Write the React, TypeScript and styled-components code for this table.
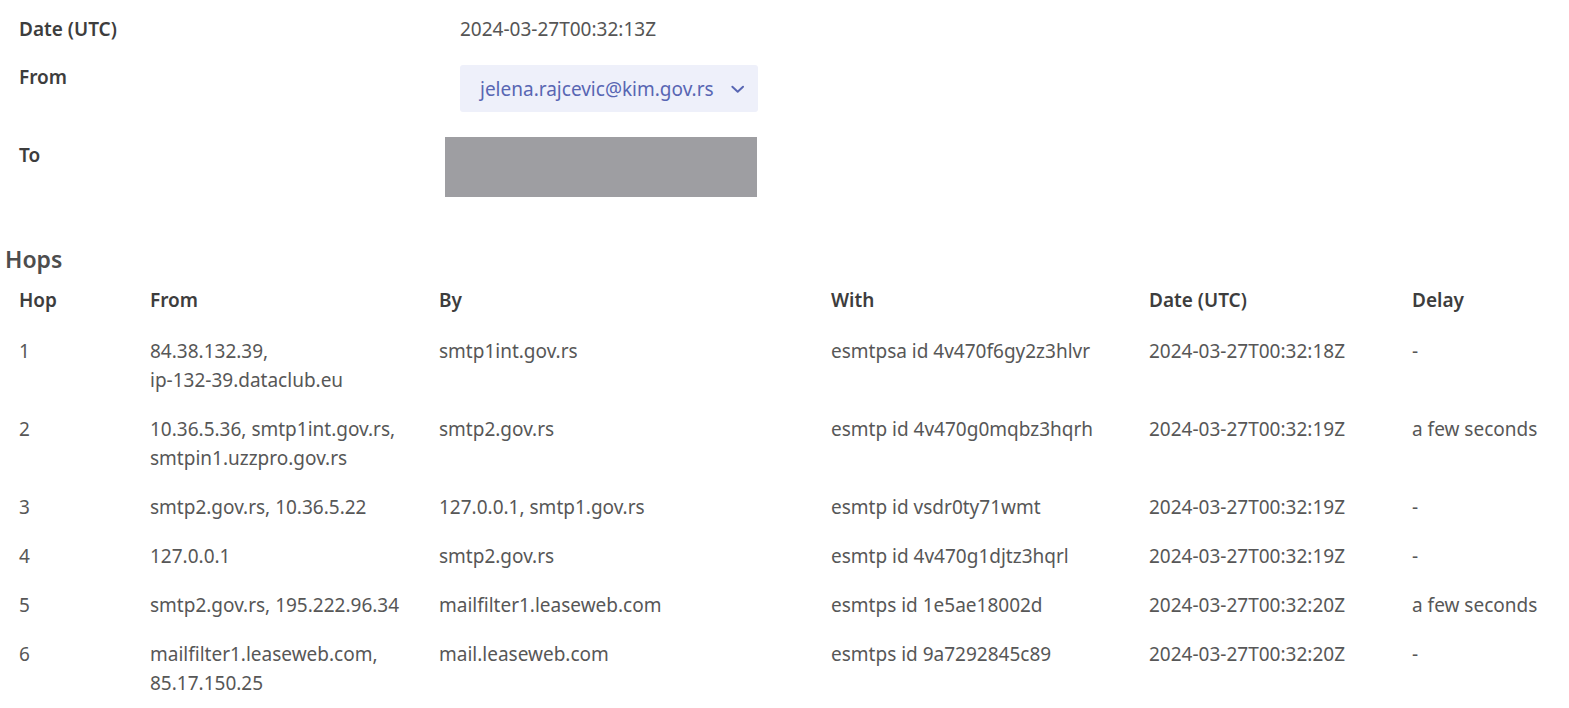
import React from "react";
import styled, { createGlobalStyle } from "styled-components";

interface Hop {
  hop: number;
  from: string[];
  by: string;
  with: string;
  date: string;
  delay: string;
}

const hops: Hop[] = [
  {
    hop: 1,
    from: ["84.38.132.39,", "ip-132-39.dataclub.eu"],
    by: "smtp1int.gov.rs",
    with: "esmtpsa id 4v470f6gy2z3hlvr",
    date: "2024-03-27T00:32:18Z",
    delay: "-",
  },
  {
    hop: 2,
    from: ["10.36.5.36, smtp1int.gov.rs,", "smtpin1.uzzpro.gov.rs"],
    by: "smtp2.gov.rs",
    with: "esmtp id 4v470g0mqbz3hqrh",
    date: "2024-03-27T00:32:19Z",
    delay: "a few seconds",
  },
  {
    hop: 3,
    from: ["smtp2.gov.rs, 10.36.5.22"],
    by: "127.0.0.1, smtp1.gov.rs",
    with: "esmtp id vsdr0ty71wmt",
    date: "2024-03-27T00:32:19Z",
    delay: "-",
  },
  {
    hop: 4,
    from: ["127.0.0.1"],
    by: "smtp2.gov.rs",
    with: "esmtp id 4v470g1djtz3hqrl",
    date: "2024-03-27T00:32:19Z",
    delay: "-",
  },
  {
    hop: 5,
    from: ["smtp2.gov.rs, 195.222.96.34"],
    by: "mailfilter1.leaseweb.com",
    with: "esmtps id 1e5ae18002d",
    date: "2024-03-27T00:32:20Z",
    delay: "a few seconds",
  },
  {
    hop: 6,
    from: ["mailfilter1.leaseweb.com,", "85.17.150.25"],
    by: "mail.leaseweb.com",
    with: "esmtps id 9a7292845c89",
    date: "2024-03-27T00:32:20Z",
    delay: "-",
  },
];

const GlobalStyle = createGlobalStyle`
  body {
    margin: 0;
    background: #ffffff;
    font-family: "Noto Sans", "Open Sans", sans-serif;
    color: #575757;
  }
`;

const App: React.FC = () => {
  return (
    <Page>
      <GlobalStyle />
      <Details>
        <DetailRow $top={5}>
          <Label>Date (UTC)</Label>
          <Value>2024-03-27T00:32:13Z</Value>
        </DetailRow>
        <DetailRow $top={9}>
          <Label>From</Label>
          <AddressPill>
            <span>jelena.rajcevic@kim.gov.rs</span>
            <svg width="22" height="22" viewBox="0 0 24 24" fill="none" stroke="currentColor" strokeWidth="2.2" strokeLinecap="round" strokeLinejoin="round">
              <path d="M6 9.5l6 5.5 6-5.5" />
            </svg>
          </AddressPill>
        </DetailRow>
        <DetailRow $top={25}>
          <Label $shift={4}>To</Label>
          <Redacted />
        </DetailRow>
      </Details>

      <SectionTitle>Hops</SectionTitle>
      <HopTable>
        <HeadCell>Hop</HeadCell>
        <HeadCell>From</HeadCell>
        <HeadCell>By</HeadCell>
        <HeadCell>With</HeadCell>
        <HeadCell>Date (UTC)</HeadCell>
        <HeadCell>Delay</HeadCell>
        {hops.map((h) => (
          <React.Fragment key={h.hop}>
            <Cell>{h.hop}</Cell>
            <Cell>
              {h.from.map((line) => (
                <div key={line}>{line}</div>
              ))}
            </Cell>
            <Cell>{h.by}</Cell>
            <Cell>{h.with}</Cell>
            <Cell>{h.date}</Cell>
            <Cell>{h.delay}</Cell>
          </React.Fragment>
        ))}
      </HopTable>
    </Page>
  );
};
export default App;

const Page = styled.div`
  width: 1569px;
  padding: 0 0 0 5px;
  box-sizing: border-box;
`;

const Details = styled.div`
  display: flex;
  flex-direction: column;
  padding-left: 14px;
`;

const DetailRow = styled.div<{ $top: number }>`
  display: grid;
  grid-template-columns: 441px auto;
  align-items: start;
  padding-top: ${(p) => p.$top}px;
`;

const Label = styled.div<{ $shift?: number }>`
  font-size: 19px;
  font-weight: 600;
  line-height: 29px;
  color: #3d3d3d;
  padding-top: ${(p) => (p.$shift !== undefined ? p.$shift : 10)}px;
`;

const Value = styled.div`
  font-size: 19px;
  line-height: 29px;
  padding-top: 10px;
  color: #555555;
`;

const AddressPill = styled.div`
  justify-self: start;
  display: flex;
  align-items: center;
  gap: 13px;
  height: 47px;
  width: 298px;
  box-sizing: border-box;
  padding: 0 10px 0 20px;
  margin-top: 12px;
  background: #eef0fa;
  border-radius: 3px;
  color: #5866b3;
  font-size: 19px;
  white-space: nowrap;
`;

const Redacted = styled.div`
  width: 312px;
  height: 60px;
  margin-left: -15px;
  background: #9e9ea2;
`;

const SectionTitle = styled.h2`
  margin: 48px 0 0;
  font-size: 23px;
  font-weight: 600;
  line-height: 28px;
  color: #4d4d4d;
`;

const HopTable = styled.div`
  display: grid;
  grid-template-columns: 131px 289px 392px 318px 263px 1fr;
`;

const HeadCell = styled.div`
  padding: 13px 0 12px 14px;
  font-size: 19px;
  font-weight: 600;
  line-height: 29px;
  color: #3d3d3d;
`;

const Cell = styled.div`
  padding: 10px 0 10px 14px;
  font-size: 19px;
  line-height: 29px;
  color: #575757;
  white-space: nowrap;
`;
